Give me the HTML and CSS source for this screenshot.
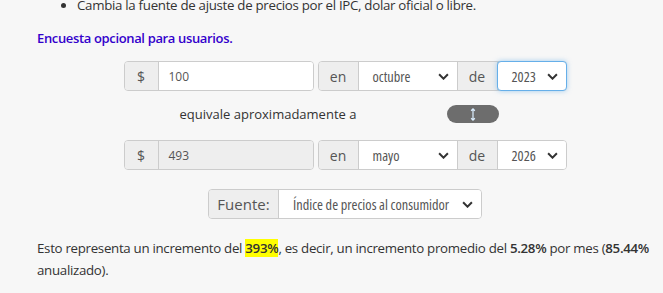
FILE: index.html
```html
<!DOCTYPE html>
<html lang="es">
<head>
<meta charset="utf-8">
<link rel="stylesheet" href="styles.css">
</head>
<body>
<div class="page">
  <ul class="bullets">
    <li>Cambia la fuente de ajuste de precios por el IPC, dolar oficial o libre.</li>
  </ul>
  <p class="survey">Encuesta opcional para usuarios.</p>

  <div class="row">
    <div class="group g-amount">
      <span class="addon a-dollar">$</span>
      <div class="field">100</div>
    </div>
    <div class="group g-date">
      <span class="addon a-en">en</span>
      <div class="select s-month"><span>octubre</span><svg class="chev" viewBox="0 0 10 6" width="11" height="7"><path d="M1 1l4 4 4-4" fill="none" stroke="#333" stroke-width="1.8"/></svg></div>
      <span class="addon a-de">de</span>
      <div class="select s-year focus"><span>2023</span><svg class="chev" viewBox="0 0 10 6" width="11" height="7"><path d="M1 1l4 4 4-4" fill="none" stroke="#333" stroke-width="1.8"/></svg></div>
    </div>
  </div>

  <div class="equiv">
    <div class="equiv-text">equivale aproximadamente a</div>
    <button class="swap"><svg viewBox="0 0 6 14" width="6" height="13"><path d="M3 1v12M1 3l2-2 2 2M1 11l2 2 2-2" fill="none" stroke="#dbeeff" stroke-width="1.3"/></svg></button>
  </div>

  <div class="row row2">
    <div class="group g-amount">
      <span class="addon a-dollar">$</span>
      <div class="field disabled">493</div>
    </div>
    <div class="group g-date">
      <span class="addon a-en">en</span>
      <div class="select s-month"><span>mayo</span><svg class="chev" viewBox="0 0 10 6" width="11" height="7"><path d="M1 1l4 4 4-4" fill="none" stroke="#333" stroke-width="1.8"/></svg></div>
      <span class="addon a-de">de</span>
      <div class="select s-year"><span>2026</span><svg class="chev" viewBox="0 0 10 6" width="11" height="7"><path d="M1 1l4 4 4-4" fill="none" stroke="#333" stroke-width="1.8"/></svg></div>
    </div>
  </div>

  <div class="row row3">
    <div class="group g-source">
      <span class="addon a-fuente">Fuente:</span>
      <div class="select s-source"><span>Índice de precios al consumidor</span><svg class="chev" viewBox="0 0 10 6" width="11" height="7"><path d="M1 1l4 4 4-4" fill="none" stroke="#333" stroke-width="1.8"/></svg></div>
    </div>
  </div>

  <p class="result">Esto representa un incremento del <b class="hl">393%</b>, es decir, un incremento promedio del <b>5.28%</b> por mes (<b>85.44%</b> anualizado).</p>
</div>
</body>
</html>
```

FILE: styles.css
```css
html, body {
  margin: 0;
  padding: 0;
  background: #f7f7f7;
}
body {
  font-family: "Open Sans", sans-serif;
  font-size: 13.3px;
  letter-spacing: -0.3px;
  color: #333;
  overflow: hidden;
}
.page {
  padding: 0 8px 0 37px;
}
.bullets {
  margin: -5px 0 0 0;
  padding-left: 40px;
  line-height: 20px;
}
.survey {
  margin: 13px 0 0 0;
  line-height: 20px;
  color: #3300cc;
  font-weight: 600;
  font-size: 13px;
  letter-spacing: -0.35px;
}
.row {
  display: flex;
  justify-content: center;
  gap: 4px;
  margin-top: 13px;
  margin-left: -2px;
  font-family: "Open Sans", sans-serif;
  font-stretch: 75%;
  font-size: 14.3px;
  letter-spacing: 0;
  color: #555;
}
.row2 { margin-top: 17px; }
.row3 { margin-top: 19px; }
.group {
  display: flex;
  height: 30px;
  box-sizing: border-box;
  border: 1px solid #ccc;
  border-radius: 4px;
}
.g-amount { width: 190px; }
.g-date { width: 249px; }
.g-source { width: 274px; }
.addon {
  flex: none;
  display: flex;
  align-items: center;
  justify-content: center;
  background: #eee;
  color: #555;
  font-size: 14px;
  font-stretch: 100%;
  box-sizing: border-box;
}
.a-dollar { width: 34px; border-right: 1px solid #ccc; border-radius: 3px 0 0 3px; }
.a-en { width: 40px; border-right: 1px solid #ccc; border-radius: 3px 0 0 3px; }
.a-de { width: 41px; border-left: 1px solid #ccc; border-right: 1px solid #ccc; }
.a-fuente { width: 70px; border-right: 1px solid #ccc; font-size: 15px; border-radius: 3px 0 0 3px; }
.field {
  flex: 1;
  display: flex;
  align-items: center;
  padding-left: 10px;
  background: #fff;
  border-radius: 0 3px 3px 0;
  font-stretch: 100%;
  font-size: 12px;
}
.field.disabled { background: #eee; }
.select {
  display: flex;
  align-items: center;
  justify-content: space-between;
  background: #fff;
  padding: 0 8px 0 14px;
  white-space: nowrap;
  box-sizing: border-box;
}
.s-month { width: 98px; flex: none; }
.s-year { flex: 1; border-radius: 0 3px 3px 0; }
.s-year.focus {
  box-shadow: 0 0 5px rgba(102,175,233,.6);
  margin: -1px;
  border: 1px solid #66afe9;
  border-radius: 4px;
}
.s-source { flex: 1; border-radius: 0 3px 3px 0; padding-left: 14px; }
.chev { flex: none; }
.equiv {
  display: flex;
  align-items: center;
  width: 443px;
  margin: 14px 0 0 86px;
  height: 18px;
  font-family: "Open Sans", sans-serif;
  font-size: 13px;
  letter-spacing: 0;
  color: #333;
}
.equiv-text {
  width: 290px;
  text-align: center;
}
.swap {
  margin-left: 34px;
  width: 52px;
  height: 18px;
  border: none;
  border-radius: 9px;
  background: #6d6d6d;
  display: flex;
  align-items: center;
  justify-content: center;
  padding: 0;
}
.result {
  margin: 18px 0 0 0;
  line-height: 22px;
}
.hl { background: #ffff00; }
b { font-weight: 600; }
```
